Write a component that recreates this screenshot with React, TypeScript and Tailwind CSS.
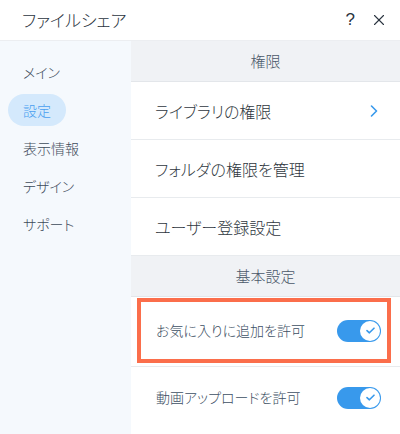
import { X } from 'lucide-react'

const jp = { fontFamily: '"Noto Sans CJK JP", "Noto Sans", sans-serif' }

const NAV = ['メイン', '設定', '表示情報', 'デザイン', 'サポート']

function Toggle() {
  return (
    <div className="w-[44px] h-[22px] rounded-full bg-[#3899ec] flex items-center justify-end pr-[1px]">
      <div className="w-[20px] h-[20px] rounded-full bg-white flex items-center justify-center">
        <svg width="9" height="7" viewBox="0 0 9 7" fill="none">
          <path d="M1 3.6 L3.4 5.8 L8 1.2" stroke="#3899ec" strokeWidth="1.6" strokeLinecap="round" strokeLinejoin="round" />
        </svg>
      </div>
    </div>
  )
}

function SectionHeader({ label }: { label: string }) {
  return (
    <div className="h-[41px] bg-[#f0f2f5] border-b border-[#e3e6ea] flex items-center justify-center text-[15px] text-[#4a5869]">
      {label}
    </div>
  )
}

function LinkRow({ label, chevron }: { label: string; chevron?: boolean }) {
  return (
    <div className="h-[58px] border-b border-[#e8ebee] flex items-center justify-between pl-[24px] pr-[22px] text-[16px] text-[#2f3740]">
      <span>{label}</span>
      {chevron && (
        <svg width="8" height="12" viewBox="0 0 8 12" fill="none">
          <path d="M1.5 1 L6.5 6 L1.5 11" stroke="#3899ec" strokeWidth="1.6" strokeLinecap="round" strokeLinejoin="round" />
        </svg>
      )}
    </div>
  )
}

export default function App() {
  return (
    <div className="w-[400px] h-[434px] bg-white overflow-hidden flex flex-col font-light [font-feature-settings:'palt']" style={jp}>
      {/* Header */}
      <div className="h-[41px] border-b border-[#eceef1] flex items-center justify-between pl-[22px] pr-[12px]">
        <span className="text-[17px] text-[#2b3440]">ファイルシェア</span>
        <div className="flex items-center gap-[15px] text-[#2b3440]">
          <span className="text-[17px] font-light" style={{ fontFamily: '"Liberation Sans", sans-serif' }}>?</span>
          <X size={18} strokeWidth={1.5} />
        </div>
      </div>

      <div className="flex flex-1">
        {/* Sidebar */}
        <div className="w-[131px] bg-[#f5f9fd] flex flex-col pt-[15px] px-[8px] gap-[6px]">
          {NAV.map((item) => (
            <div
              key={item}
              className={
                item === '設定'
                  ? 'h-[32px] w-fit px-[15px] rounded-full bg-[#d4e9fc] text-[#4a9ff0] flex items-center text-[14px]'
                  : 'h-[32px] px-[15px] text-[#3d4b5a] flex items-center text-[14px]'
              }
            >
              {item}
            </div>
          ))}
        </div>

        {/* Content */}
        <div className="flex-1 flex flex-col">
          <SectionHeader label="権限" />
          <LinkRow label="ライブラリの権限" chevron />
          <LinkRow label="フォルダの権限を管理" />
          <LinkRow label="ユーザー登録設定" />
          <SectionHeader label="基本設定" />
          <div className="h-[70px] border-b border-[#e8ebee] pl-[6px] pr-[9px] pt-[1px] pb-[3px]">
            <div className="h-full border-[4px] border-[#fb6e4b] flex items-center justify-between pl-[15px] pr-[6px] text-[14px] text-[#3d4f63]">
              <span>お気に入りに追加を許可</span>
              <Toggle />
            </div>
          </div>
          <div className="flex-1 flex items-center justify-between pl-[25px] pr-[19px] pb-[6px] text-[14px] text-[#3d4f63]">
            <span>動画アップロードを許可</span>
            <Toggle />
          </div>
        </div>
      </div>
    </div>
  )
}
